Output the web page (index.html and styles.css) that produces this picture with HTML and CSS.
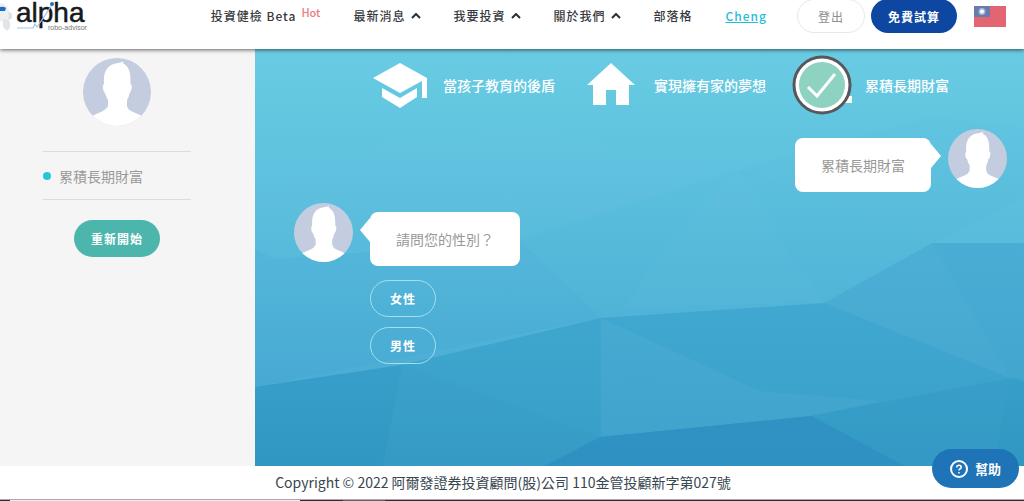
FILE: index.html
```html
<!DOCTYPE html>
<html lang="zh-Hant">

<head>
    <meta charset="UTF-8" />
    <meta name="viewport" content="width=device-width, initial-scale=1" />
    <title>阿爾發證券投資顧問</title>
    <link rel="stylesheet" href="styles.css">
</head>
<body>
    <!-- shared shapes -->
    <svg class="defs" width="0" height="0" aria-hidden="true">
        <symbol id="avatar" viewBox="0 0 68 68">
            <clipPath id="avatar-clip"><circle cx="34" cy="34" r="34" /></clipPath>
            <g clip-path="url(#avatar-clip)">
                <rect width="68" height="68" fill="#c4cce0" />
                <path fill="#fff" d="M21 26C20 14 24 6 35 5L41 3.500Q39 5 41 6C46 9 48 15 47.500 26Q49.500 27 48.500 31Q48 34 46.500 35Q46 39 44 42L44 48Q45 52 49 53.500L57 57Q63 60 66 68L2 68Q5 60 11 57L19 53.500Q23 52 25 48L25 42Q23 39 22 35Q20.500 34 20 31Q19.500 27 21 26Z" />
            </g>
        </symbol>
        <symbol id="chevron" viewBox="0 0 10 6">
            <path d="M1 5l4-4 4 4" fill="none" stroke="#263238" stroke-width="2" />
        </symbol>
    </svg>

    <header class="header">
        <a href="#" class="logo" aria-label="alpha robo-advisor">
            <svg width="88" height="32" viewBox="0 0 88 32">
                <path d="M0 3Q7 4 9 10Q10 16 6 20L0 22Z" fill="#edf0f3" />
                <path d="M0 7Q4 6 6 8L5 11L0 11Z" fill="#1c6fc0" />
                <path d="M9 12Q13 13 12 17Q11 21 8 19Z" fill="#dde1e5" />
                <path d="M3 20Q9 17 10 23Q11 28 7 31L3 27Z" fill="#e2e4e7" />
                <text class="logo-name" x="16" y="22">alpha</text>
                <text class="logo-sub" x="48" y="30">robo-advisor</text>
                <path d="M17 28H33L35 24L37 27L52 5" fill="none" stroke="#a3c4ea" stroke-width="1.200" />
                <circle cx="52" cy="4" r="2" fill="#1c6fc0" />
            </svg>
        </a>
        <nav class="nav">
            <a href="#">投資健檢 Beta <sup class="hot">Hot</sup></a>
            <a href="#">最新消息 <svg class="chevron"><use href="#chevron" /></svg></a>
            <a href="#">我要投資 <svg class="chevron"><use href="#chevron" /></svg></a>
            <a href="#">關於我們 <svg class="chevron"><use href="#chevron" /></svg></a>
            <a href="#">部落格</a>
            <a href="#" class="user">Cheng</a>
        </nav>
        <div class="account">
            <button class="button logout-button">登出</button>
            <button class="button trial-button">免費試算</button>
        </div>
        <a href="#" class="flag" aria-label="繁體中文">
            <svg width="32" height="21" viewBox="0 0 32 21">
                <rect width="32" height="21" fill="#e26672" />
                <rect width="16" height="11" fill="#667cae" />
                <circle cx="8" cy="5.500" r="3.500" fill="#a9b5d2" />
                <circle cx="8" cy="5.500" r="2" fill="#fff" />
            </svg>
        </a>
    </header>

    <div class="page">
        <aside class="sidebar">
            <svg class="avatar avatar-large"><use href="#avatar" /></svg>
            <ul class="steps">
                <li>累積長期財富</li>
            </ul>
            <button class="button restart-button">重新開始</button>
        </aside>

        <main class="chat">
            <svg class="chat-background" viewBox="0 0 770 417" preserveAspectRatio="none" aria-hidden="true">
                <defs>
                    <linearGradient id="sky" x1="0" y1="0" x2="0" y2="1">
                        <stop offset="0" stop-color="#69cce3" />
                        <stop offset="0.480" stop-color="#58bbdb" />
                        <stop offset="0.800" stop-color="#4badd5" />
                        <stop offset="1" stop-color="#43a6d0" />
                    </linearGradient>
                    <linearGradient id="middle" x1="0" y1="0" x2="0" y2="1">
                        <stop offset="0" stop-color="#44abd3" />
                        <stop offset="1" stop-color="#389fca" />
                    </linearGradient>
                    <linearGradient id="bottom" x1="0" y1="0" x2="0" y2="1">
                        <stop offset="0" stop-color="#389fca" />
                        <stop offset="1" stop-color="#3097c3" />
                    </linearGradient>
                </defs>
                <rect width="770" height="417" fill="url(#sky)" />
                <path d="M0 139L120 95L280 76L370 100L484 121L265 191L115 203L20 210L0 205Z" fill="#fff" opacity="0.010" />
                <path d="M265 191L346 269L0 338V200L20 210L115 203Z" fill="#389fce" opacity="0.140" />
                <path d="M484 121L678 194L570 254L346 269L265 191Z" fill="#3ca6d0" opacity="0.070" />
                <path d="M484 121L540 212H398Z" fill="#fff" opacity="0.020" />
                <path d="M398 212H540L570 254L372 258Z" fill="#fff" opacity="0.020" />
                <path d="M484 121L678 194L770 150V80L680 68Z" fill="#389fce" opacity="0.040" />
                <path d="M0 338L147 316L346 269L570 254L678 194H770V417H0Z" fill="url(#middle)" />
                <path d="M678 194H770V329H756Z" fill="#fff" opacity="0.030" />
                <path d="M570 254L678 194L756 329Z" fill="#fff" opacity="0.050" />
                <path d="M346 269L506 342L346 328Z" fill="#fff" opacity="0.040" />
                <path d="M346 328L506 342L627 352L557 367L346 388Z" fill="#fff" opacity="0.040" />
                <path d="M147 316L346 269V388Z" fill="#2d96c5" opacity="0.080" />
                <path d="M0 338L147 316L346 388L557 367L756 329L770 333V417H0Z" fill="url(#bottom)" />
                <path d="M147 316L346 388L290 417H128Z" fill="#4bb0d3" opacity="0.200" />
                <path d="M756 329L557 367L650 417H740Z" fill="#41a7cf" opacity="0.200" />
                <path d="M346 388L557 367L650 417H290Z" fill="#2d8fc1" opacity="0.700" />
            </svg>

            <div class="goals">
                <div class="goal">
                    <svg class="goal-icon" viewBox="0 0 58 58" fill="#fff">
                        <path d="M2 22L29 7L56 22V42H51V25L29 37Z" />
                        <path d="M11 32L29 42L46 32V41L29 52L11 41Z" />
                    </svg>
                    <span>當孩子教育的後盾</span>
                </div>
                <div class="goal">
                    <svg class="goal-icon" viewBox="0 0 58 58" fill="#fff">
                        <path d="M29 7L53 29H47V49H34V34H24V49H11V29H5Z" />
                    </svg>
                    <span>實現擁有家的夢想</span>
                </div>
                <div class="goal">
                    <svg class="goal-icon" viewBox="0 0 58 58">
                        <path d="M50 40H59V47H50Z" fill="#fff" />
                        <circle cx="29" cy="29" r="28" fill="#fff" stroke="#56585e" stroke-width="3" />
                        <circle cx="29" cy="29" r="23" fill="#8ed2c2" />
                        <path d="M15 31L24 40L42 18" fill="none" stroke="#fff" stroke-width="3" />
                    </svg>
                    <span>累積長期財富</span>
                </div>
            </div>

            <div class="message message-answer">
                <p class="bubble">累積長期財富</p>
                <svg class="avatar"><use href="#avatar" /></svg>
            </div>

            <div class="message message-question">
                <svg class="avatar"><use href="#avatar" /></svg>
                <p class="bubble">請問您的性別？</p>
            </div>

            <div class="options">
                <button class="button option-button">女性</button>
                <button class="button option-button">男性</button>
            </div>
        </main>
    </div>

    <footer class="footer">
        <p>Copyright © 2022 阿爾發證券投資顧問(股)公司 110金管投顧新字第027號</p>
    </footer>
    <div class="taskbar"></div>

    <button class="help-button">
        <svg width="18" height="18" viewBox="0 0 18 18" fill="none" stroke="currentColor" stroke-width="2">
            <circle cx="9" cy="9" r="8" />
            <path d="M6.800 7.400Q6.800 5.300 9 5.300Q11.200 5.300 11.200 7.200Q11.200 8.300 9.800 9Q9 9.500 9 10.600M9 12V13.600" stroke-width="1.500" />
        </svg>
        幫助
    </button>
</body>
</html>
```
FILE: styles.css
```css
* {
    box-sizing: border-box;
}

body {
    margin: 0;
    min-height: 100vh;
    display: flex;
    flex-direction: column;
    font-family: "Noto Sans CJK TC", sans-serif;
    font-size: 14px;
    line-height: 20px;
    color: #37474f;
    background: #fff;
}

p {
    margin: 0;
}

.defs {
    position: absolute;
}

.header {
    position: relative;
    z-index: 2;
    display: flex;
    align-items: center;
    height: 49px;
    padding: 0 18px 17px 0;
    background: #fff;
    box-shadow: 0 1px 4px rgba(0, 0, 0, 0.6);
}

.logo {
    display: flex;
    margin-right: auto;
}

.logo-name {
    font-family: "Liberation Sans", sans-serif;
    font-size: 28px;
    fill: #15181c;
    stroke: #15181c;
    stroke-width: 0.5;
}

.logo-sub {
    font-family: "Liberation Sans", sans-serif;
    font-size: 7px;
    fill: #777;
}

.nav {
    display: flex;
    align-items: center;
    gap: 33px;
    margin-right: 30px;
}

.nav a {
    display: flex;
    align-items: center;
    gap: 5px;
    font-size: 12px;
    font-weight: 500;
    letter-spacing: 1px;
    color: #37393d;
    text-decoration: none;
    white-space: nowrap;
}

.nav .user {
    color: #26bcd8;
    text-decoration: underline;
}

.hot {
    align-self: flex-start;
    font-size: 11px;
    line-height: 12px;
    letter-spacing: 0;
    color: #ee7a80;
}

.chevron {
    width: 10px;
    height: 6px;
}

.account {
    display: flex;
    gap: 6px;
    margin-right: 17px;
}

.button {
    height: 37px;
    padding: 0 17px;
    border: none;
    border-radius: 19px;
    font-family: inherit;
    font-size: 12px;
    font-weight: 700;
    letter-spacing: 1px;
    color: #fff;
    cursor: pointer;
}

.logout-button {
    height: 34px;
    padding: 0 20px;
    border: 1px solid #e3eaec;
    background: #fff;
    font-weight: 400;
    color: #8e8e8e;
}

.trial-button {
    height: 34px;
    background: #0d47a1;
}

.flag {
    display: flex;
}

.page {
    flex: 1;
    display: flex;
}

.sidebar {
    flex: 0 0 255px;
    display: flex;
    flex-direction: column;
    align-items: center;
    padding: 9px 64px 0 43px;
    background: #f5f5f5;
}

.avatar {
    flex: none;
    width: 59px;
    height: 59px;
}

.avatar-large {
    width: 68px;
    height: 68px;
}

.steps {
    align-self: stretch;
    margin: 25px 0 20px;
    padding: 0;
    list-style: none;
    border-top: 1px solid #dcdcdc;
    border-bottom: 1px solid #dcdcdc;
}

.steps li {
    display: flex;
    align-items: center;
    gap: 8px;
    height: 47px;
    color: #9a9a9a;
}

.steps li::before {
    content: "";
    width: 8px;
    height: 8px;
    border-radius: 50%;
    background: #26c6da;
}

.restart-button {
    background: #4db6ac;
}

.chat {
    position: relative;
    flex: 1;
    min-width: 0;
    padding: 7px 17px 0 39px;
}

.chat > * {
    position: relative;
}

.chat .chat-background {
    position: absolute;
    top: 0;
    left: 0;
    width: 100%;
    height: 100%;
}

.goals {
    display: grid;
    grid-template-columns: repeat(3, 211px);
    justify-content: end;
    padding-right: 3px;
}

.goal {
    display: flex;
    align-items: center;
    gap: 14px;
    font-weight: 500;
    color: #fff;
}

.goal-icon {
    flex: none;
    width: 58px;
    height: 58px;
    overflow: visible;
}

.message {
    display: flex;
    align-items: flex-start;
    gap: 17px;
}

.message-answer {
    justify-content: flex-end;
    margin-top: 15px;
}

.message-question {
    margin-top: 11px;
}

.bubble {
    position: relative;
    margin-top: 9px;
    padding: 17px 26px;
    border-radius: 8px;
    background: #fff;
    color: #999;
}

.bubble::after {
    content: "";
    position: absolute;
    top: 6px;
    border: 12px solid transparent;
}

.message-answer .bubble::after {
    left: 100%;
    border-left: 10px solid #fff;
    border-right: none;
}

.message-question .bubble::after {
    right: 100%;
    border-right: 10px solid #fff;
    border-left: none;
}

.options {
    display: flex;
    flex-direction: column;
    align-items: flex-start;
    gap: 10px;
    margin: 14px 0 0 76px;
}

.option-button {
    padding: 0 19px;
    border: 1px solid #a5e0ec;
    background: transparent;
}

.footer {
    padding: 6px 18px 7px 0;
    text-align: center;
    color: #37474f;
}

.taskbar {
    height: 2px;
    border-top: 1px solid #aaa;
    background: linear-gradient(to right, #263238 10px, #eee 10px, #eee 300px, #263238 300px, #263238 343px, #666 343px, #666 385px, #263238 385px);
}

.help-button {
    position: fixed;
    right: 5px;
    bottom: 13px;
    z-index: 3;
    display: flex;
    align-items: center;
    gap: 7px;
    height: 39px;
    padding: 0 18px;
    border: none;
    border-radius: 20px;
    background: #1f73b7;
    font-family: inherit;
    font-size: 13px;
    font-weight: 700;
    color: #fff;
    cursor: pointer;
}
```
